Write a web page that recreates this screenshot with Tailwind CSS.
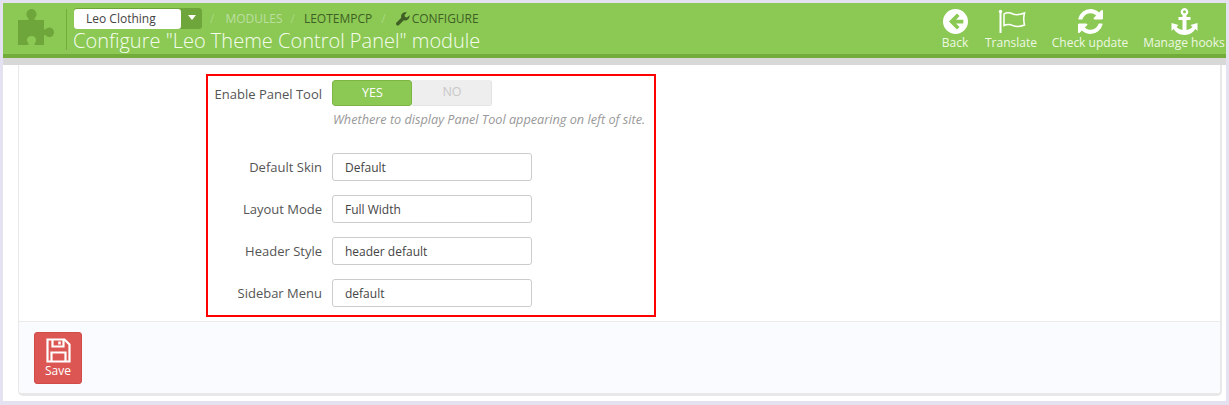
<!DOCTYPE html>
<html lang="en">
<head>
<meta charset="UTF-8">
<title>Configure module</title>
<script src="https://cdn.jsdelivr.net/npm/@tailwindcss/browser@4"></script>
</head>
<body class="bg-[#e4e1f0] font-['Open_Sans',sans-serif] overflow-hidden">
<div class="w-[1229px] h-[405px] pt-[3px] px-[3px] pb-[4px]">
  <div class="h-[398px] bg-white">
    <!-- Header -->
    <header class="h-[55px] bg-[#8bc954] border-b-[4px] border-[#72ad3c] flex text-white">
      <svg class="w-[40px] h-[40px] ml-[12px] mt-[5px] shrink-0" viewBox="0 0 40 40" fill="#6fa63b"><path d="M3 12h9.500c1 0 1.500-.8.8-1.700-1-1.200-1.800-2.300-1.800-3.900C11.500 3.500 13.800 1 16.500 1s5 2.500 5 5.400c0 1.600-.8 2.700-1.800 3.900-.7.900-.2 1.700.8 1.700H29v8.500c0 1 .8 1.500 1.700.8 1.200-1 2-1.800 3.600-1.800 2.800 0 4.700 2.200 4.700 4.800s-1.900 4.800-4.700 4.800c-1.600 0-2.400-.8-3.600-1.800-.9-.7-1.700-.2-1.700.8V37H20.500c-1 0-1.500-.8-.8-1.700 1-1.200 1.300-2 1.300-3.300 0-2.500-2-4-4.500-4s-4.500 1.500-4.500 4c0 1.300.3 2.100 1.300 3.300.7.900.2 1.700-.8 1.700H3z"/></svg>
      <div class="ml-[11px] mt-[6px] h-[41px] w-px bg-[#72ad3c] shrink-0"></div>
      <div class="ml-[7px] mt-[5px] w-[500px] shrink-0">
        <div class="flex items-center h-[21px] text-[12px] leading-none">
          <div class="w-[128px] h-[21px] rounded-[3px] bg-[#6fa63b] flex shrink-0">
            <div class="w-[107px] h-[20px] mt-[0.5px] bg-white rounded-[3px] text-[#444] text-[12px] leading-[20px] pl-[12px]">Leo Clothing</div>
            <div class="flex-1 flex justify-center pt-[7px]"><div class="w-0 h-0 border-x-[4.500px] border-x-transparent border-t-[5px] border-t-white"></div></div>
          </div>
          <span class="ml-[8px] text-[#a8d87f]">/</span>
          <span class="ml-[11px] text-[#bcdfa0]">MODULES</span>
          <span class="ml-[8px] text-[#a8d87f]">/</span>
          <span class="ml-[9px] text-[#3f5f24]">LEOTEMPCP</span>
          <span class="ml-[9px] text-[#a8d87f]">/</span>
          <svg class="w-[14px] h-[14px] ml-[10px]" viewBox="0 0 14 14" fill="#3f5f24"><path d="M13.400 3.200 11 5.500 9 5 8.500 3 10.900.600C9.300-.1 7.500.2 6.300 1.400 5.100 2.600 4.800 4.200 5.300 5.700L.5 10.500c-.7.700-.7 1.800 0 2.500s1.800.7 2.500 0l4.800-4.800c1.500.5 3.200.2 4.400-1 1.200-1.200 1.600-2.900 1.200-4.500z"/></svg>
          <span class="ml-[2px] text-[#3f5f24]">CONFIGURE</span>
        </div>
        <h1 class="text-[20px] font-light leading-[24px] -ml-[1px] text-[#f6fdee] whitespace-nowrap">Configure "Leo Theme Control Panel" module</h1>
      </div>
      <nav class="ml-auto flex text-[12px] leading-[14px] text-[#eef8e2] whitespace-nowrap">
        <a class="flex flex-col items-center pt-[6px] w-[26px] mr-[17px]">
          <svg class="w-[25px] h-[25px]" viewBox="0 0 24 24" fill="#fff"><path fill-rule="evenodd" d="M12 0a12 12 0 1 1 0 24 12 12 0 0 1 0-24zm1.400 4.300L5.700 12l7.700 7.700 2.500-2.500-3.400-3.400h7v-3.600h-7l3.400-3.400z"/></svg>
          <span class="mt-[2px]">Back</span>
        </a>
        <a class="flex flex-col items-center pt-[6px] w-[52px] mr-[15px]">
          <svg class="w-[28px] h-[25px] ml-[2px]" viewBox="0 0 28 25" fill="none" stroke="#fff" stroke-width="1.500"><path d="M2.500 3v21" stroke-width="2"/><circle cx="2.500" cy="2.500" r="1.700" fill="#fff" stroke="none"/><path d="M6 5c3-2 6-1.500 9 0 3 1.200 6 1 11.500-1-1 4-1 8 0 12-5 2-8 2-11 .8-3-1.500-6-2-9.500-.3z"/></svg>
          <span class="mt-[2px]">Translate</span>
        </a>
        <a class="flex flex-col items-center pt-[6px] w-[76px] mr-[15px]">
          <svg class="w-[25px] h-[25px]" viewBox="0 0 1536 1536" fill="#fff"><path d="M1511 928q0 5-1 7-64 268-268 434.500T764 1536q-146 0-282.500-55T238 1324l-129 129q-19 19-45 19t-45-19-19-45V960q0-26 19-45t45-19h448q26 0 45 19t19 45-19 45l-137 137q71 66 161 102t187 36q134 0 250-65t186-179q11-17 53-117 8-23 30-23h192q13 0 22.500 9.500t9.500 22.500zm25-800v448q0 26-19 45t-45 19h-448q-26 0-45-19t-19-45 19-45l138-138Q969 256 768 256q-134 0-250 65T332 500q-11 17-53 117-8 23-30 23H50q-13 0-22.500-9.500T18 608v-7q65-268 270-434.500T768 0q146 0 284 55.500T1297 212l130-129q19-19 45-19t45 19 19 45z"/></svg>
          <span class="mt-[2px]">Check update</span>
        </a>
        <a class="flex flex-col items-center pt-[5px] w-[82px] mr-[1px]">
          <svg class="w-[29px] h-[27px]" viewBox="0 0 28 27" fill="#fff"><path fill-rule="evenodd" d="M14 0a3.800 3.800 0 0 1 2 7v2h4v3h-4v10c2.500-.4 4.500-1.500 6-3l-2-2 7-2v8l-2-2c-2 3-6 6-11 6s-9-3-11-6l-2 2v-8l7 2-2 2c1.500 1.500 3.500 2.600 6 3V12H8V9h4V7a3.800 3.800 0 0 1 2-7zm0 2.300a1.500 1.500 0 1 0 0 3 1.500 1.500 0 0 0 0-3z"/></svg>
          <span class="mt-[1px]">Manage hooks</span>
        </a>
      </nav>
    </header>
    <div class="h-[7px] bg-[#d8d8d8]"></div>

    <!-- Panel -->
    <div class="ml-[15px] w-[1204px] h-[331px] border-l border-r-2 border-b-[3px] border-[#e8e8e8] rounded-b-[5px] flex flex-col">
      <div class="h-[257px] pl-[187px] pt-[9px] border-b border-[#ebebeb] text-[#555]">
        <form class="w-[450px] h-[243px] border-2 border-[#f00] text-[13px]">
          <div class="flex mt-[4px]">
            <label class="w-[114px] text-right leading-[28px] shrink-0">Enable Panel Tool</label>
            <div class="ml-[10px]">
              <div class="w-[160px] h-[26px] flex text-[12.500px] leading-[24px] text-center rounded-[3px] overflow-hidden">
                <span class="w-[80px] pl-[1px] bg-[#8bc954] border border-[#7cb544] rounded-[3px] text-white">YES</span>
                <span class="w-[80px] pl-[1px] bg-[#eeeeee] text-[#c8c8c8] border-b border-r border-[#e3e3e3]">NO</span>
              </div>
              <p class="text-[12.700px] pl-[1px] italic text-[#999] leading-[16px] mt-[5px] whitespace-nowrap">Whethere to display Panel Tool appearing on left of site.</p>
            </div>
          </div>
          <div class="flex flex-col gap-[14px] mt-[26px]">
            <div class="flex h-[28px]">
              <label class="w-[114px] text-right leading-[28px] shrink-0">Default Skin</label>
              <div class="ml-[10px] w-[200px] h-[28px] bg-white border border-[#ccc] rounded-[3px] pl-[12px] text-[12px] leading-[28px] text-[#444]">Default</div>
            </div>
            <div class="flex h-[28px]">
              <label class="w-[114px] text-right leading-[28px] shrink-0">Layout Mode</label>
              <div class="ml-[10px] w-[200px] h-[28px] bg-white border border-[#ccc] rounded-[3px] pl-[12px] text-[12px] leading-[28px] text-[#444]">Full Width</div>
            </div>
            <div class="flex h-[28px]">
              <label class="w-[114px] text-right leading-[28px] shrink-0">Header Style</label>
              <div class="ml-[10px] w-[200px] h-[28px] bg-white border border-[#ccc] rounded-[3px] pl-[12px] text-[12px] leading-[28px] text-[#444]">header default</div>
            </div>
            <div class="flex h-[28px]">
              <label class="w-[114px] text-right leading-[28px] shrink-0">Sidebar Menu</label>
              <div class="ml-[10px] w-[200px] h-[28px] bg-white border border-[#ccc] rounded-[3px] pl-[12px] text-[12px] leading-[28px] text-[#444]">default</div>
            </div>
          </div>
        </form>
      </div>
      <div class="flex-1 bg-[#fafbfe] pl-[15px] pt-[10px] rounded-b-[5px]">
        <button type="button" class="w-[48px] h-[52px] bg-[#dc5653] border border-[#d04c49] rounded-[3px] flex flex-col items-center pt-[5px] text-white text-[12px] leading-[14px]">
          <svg class="w-[25px] h-[25px]" viewBox="0 0 25 25" fill="none" stroke="#fff" stroke-width="2.200"><path d="M1.500 1.500h17l5 5v17h-22z"/><path d="M6.500 1.500v7h11v-7M5.500 23.500v-9h14v9"/><path d="M13.500 3.500v3" stroke-width="2.500"/></svg>
          <span class="mt-[1px]">Save</span>
        </button>
      </div>
    </div>
  </div>
</div>
</body>
</html>
